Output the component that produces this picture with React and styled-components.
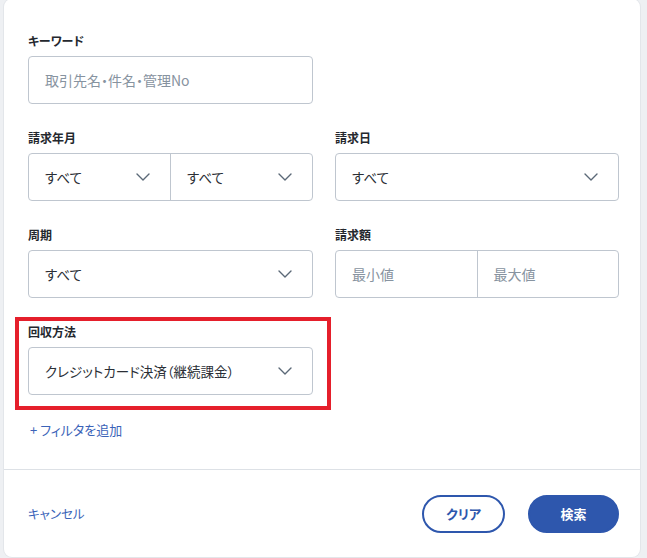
import React from 'react';
import styled, { createGlobalStyle } from 'styled-components';

const GlobalStyle = createGlobalStyle`
  html, body {
    margin: 0;
    padding: 0;
    background: #eef0f3;
  }
  body {
    font-family: "Noto Sans CJK JP", "Noto Sans", "Liberation Sans", sans-serif;
    font-feature-settings: "palt";
    color: #2b2f36;
  }
`;

const Page = styled.div`
  width: 647px;
  height: 558px;
  padding: 0 7px 0 4px;
  box-sizing: border-box;
  overflow: hidden;
`;

const Panel = styled.div`
  height: 558px;
  margin-top: -1px;
  background: #fff;
  border-radius: 8px;
  box-shadow: 0 0 0 1px #e3e6ea;
  display: flex;
  flex-direction: column;
`;

const Body = styled.div`
  padding: 34px 21px 0 24px;
  flex: 1;
`;

const Grid = styled.div`
  display: grid;
  grid-template-columns: 285px 284px;
  column-gap: 22px;
  row-gap: 26px;
`;

const Field = styled.div`
  position: relative;
  display: flex;
  flex-direction: column;
  gap: 7px;

  ${p => p.$marked && `
    &::after {
      content: '';
      position: absolute;
      top: -7px;
      left: -13px;
      right: -18px;
      bottom: -15px;
      border: 4px solid #e51f2b;
      pointer-events: none;
    }
  `}
`;

const Label = styled.div`
  font-size: 12px;
  font-weight: 700;
  line-height: 16px;
  color: #24282e;
`;

const Box = styled.div`
  height: 48px;
  box-sizing: border-box;
  border: 1px solid #bfc6cf;
  border-radius: 4px;
  display: flex;
  background: #fff;
`;

const Part = styled.div`
  flex: 1;
  display: flex;
  align-items: center;
  justify-content: space-between;
  padding: 0 20px 0 16px;
  font-size: ${p => (p.$placeholder ? '14px' : '13.5px')};
  color: ${p => (p.$placeholder ? '#8793a0' : '#2b2f36')};
  & + & {
    border-left: 1px solid #bfc6cf;
  }
`;

const Chevron = () => (
  <svg width="14" height="8" viewBox="0 0 14 8" fill="none">
    <path d="M1 1l6 6 6-6" stroke="#5b6977" strokeWidth="1.4" strokeLinecap="round" strokeLinejoin="round" />
  </svg>
);

const AddLink = styled.div`
  margin-top: 26px;
  margin-left: 2px;
  font-size: 13px;
  color: #3b63b8;
  line-height: 18px;
`;

const Divider = styled.div`
  height: 1px;
  background: #dde1e6;
`;

const Footer = styled.div`
  height: 87px;
  display: flex;
  align-items: center;
  padding: 0 21px 0 24px;
  gap: 23px;
`;

const Cancel = styled.div`
  font-size: 12.5px;
  color: #3b63b8;
  margin-right: auto;
`;

const Button = styled.button`
  height: 38px;
  box-sizing: border-box;
  border-radius: 19px;
  font-family: inherit;
  font-feature-settings: "palt";
  font-size: 13px;
  font-weight: 700;
  border: 2px solid #2e57ad;
  background: ${p => (p.$primary ? '#2e57ad' : '#fff')};
  color: ${p => (p.$primary ? '#fff' : '#2e57ad')};
  width: ${p => p.$w}px;
  padding: 0;
`;

const Select = ({ value }) => (
  <Part>
    <span>{value}</span>
    <Chevron />
  </Part>
);

export default function App() {
  return (
    <Page>
      <GlobalStyle />
      <Panel>
        <Body>
          <Grid>
            <Field>
              <Label>キーワード</Label>
              <Box>
                <Part $placeholder>取引先名・件名・管理No</Part>
              </Box>
            </Field>
            <div />
            <Field>
              <Label>請求年月</Label>
              <Box>
                <Select value="すべて" />
                <Select value="すべて" />
              </Box>
            </Field>
            <Field>
              <Label>請求日</Label>
              <Box>
                <Select value="すべて" />
              </Box>
            </Field>
            <Field>
              <Label>周期</Label>
              <Box>
                <Select value="すべて" />
              </Box>
            </Field>
            <Field>
              <Label>請求額</Label>
              <Box>
                <Part $placeholder>最小値</Part>
                <Part $placeholder>最大値</Part>
              </Box>
            </Field>
            <Field $marked>
              <Label>回収方法</Label>
              <Box>
                <Select value="クレジットカード決済（継続課金）" />
              </Box>
            </Field>
          </Grid>
          <AddLink>+ フィルタを追加</AddLink>
        </Body>
        <Divider />
        <Footer>
          <Cancel>キャンセル</Cancel>
          <Button $w={83}>クリア</Button>
          <Button $primary $w={91}>検索</Button>
        </Footer>
      </Panel>
    </Page>
  );
}
